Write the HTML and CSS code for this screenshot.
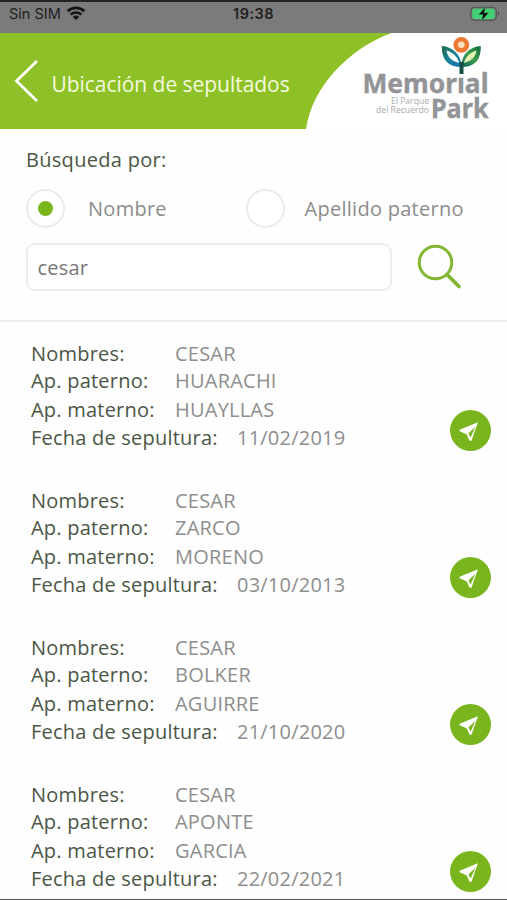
FILE: index.html
```
<!DOCTYPE html>
<html lang="es">
<head>
<meta charset="utf-8">
<title>Ubicación de sepultados</title>
<link rel="stylesheet" href="styles.css">
</head>
<body>
<svg class="defs" width="0" height="0" aria-hidden="true">
  <symbol id="plane" viewBox="0 0 42 42"><path fill="#fff" fill-rule="evenodd" d="M28.600 12.600 9.800 20.300V21.800L17 24.800 20 31.500H22ZM26 17.200 21.200 28.200 18.800 24.200Z"/></symbol>
</svg>
<div class="status">
  <span class="carrier">Sin SIM</span>
  <svg class="wifi" width="20" height="15" viewBox="0 0 20 15"><g fill="none" stroke="#161616" stroke-width="2.7"><path d="M1.6 5.3a12.2 12.2 0 0 1 16.8 0"/><path d="M4.7 8.6a7.7 7.7 0 0 1 10.6 0"/></g><path fill="#161616" d="M10 14 6.8 10.9a4.6 4.6 0 0 1 6.4 0Z"/></svg>
  <span class="clock">19:38</span>
  <svg class="battery" width="31" height="16" viewBox="0 0 31 16"><rect x=".8" y="1.3" width="25.5" height="13" rx="3.5" fill="none" stroke="#4b504d"/><rect x="2.2" y="2.7" width="22.7" height="10.2" rx="2" fill="#43cf73"/><path d="M27.8 5.6q3 2.2 0 4.4Z" fill="#4b504d"/><path d="M15.7.8 8.3 8.7h4.6L11.3 15l7.6-8.2h-4.7Z" fill="#0c0c0c" stroke="#43cf73" stroke-width=".5"/></svg>
</div>
<header class="header">
  <svg class="back" width="26" height="44" viewBox="0 0 26 44"><path d="M24 2 3.500 22 24 42" fill="none" stroke="#fff" stroke-width="2.800"/></svg>
  <h1 class="title">Ubicación de sepultados</h1>
  <svg class="logo" width="202" height="97" viewBox="0 0 202 97">
    <defs>
      <linearGradient id="lf" x1="0" y1="0" x2="1" y2="1"><stop offset="0" stop-color="#1b6a45"/><stop offset=".45" stop-color="#1a8295"/><stop offset="1" stop-color="#1677b5"/></linearGradient>
      <linearGradient id="rf" x1="1" y1="0" x2="0" y2="1"><stop offset="0" stop-color="#12663f"/><stop offset=".5" stop-color="#3c9f4c"/><stop offset="1" stop-color="#0c6260"/></linearGradient>
    </defs>
    <path fill="#fff" d="M202 0H86.500C45 15 7 53 1 96V97H202Z"/>
    <circle cx="156.300" cy="11.800" r="5.600" fill="#fde0bf" stroke="#ee7934" stroke-width="4.600"/>
    <path fill="url(#lf)" d="M136.800 13C147 14 156 20 156.500 34 143 34 136.500 27 136.800 13Z"/>
    <path fill="url(#rf)" d="M175.800 13C165 14 156.500 20 156.500 34 170 34 176 27 175.800 13Z"/>
    <path fill="#f4fbfb" d="M141.500 17.500C148 19.500 153 24 154 30 146 27.500 142.500 24 141.500 17.500Z"/>
    <path fill="#e2f2b4" d="M171.500 17.500C165 19.500 160 24 159 30 167 27.500 170.500 24 171.500 17.500Z"/>
    <path d="M156.500 29V41" stroke="#174f48" stroke-width="4"/>
    <text x="57.500" y="59.500" class="brand" textLength="126" lengthAdjust="spacingAndGlyphs">Memorıal</text>
    <text x="126" y="85" class="brand" textLength="57.500" lengthAdjust="spacingAndGlyphs">Park</text>
    <text x="86" y="71" class="tag" textLength="38" lengthAdjust="spacingAndGlyphs">El Parque</text>
    <text x="71" y="79.500" class="tag" textLength="53" lengthAdjust="spacingAndGlyphs">del Recuerdo</text>
  </svg>
</header>
<section class="search">
  <div class="label">Búsqueda por:</div>
  <div class="options">
    <div class="option first"><span class="radio on"></span><span class="name">Nombre</span></div>
    <div class="option"><span class="radio"></span><span class="name wide">Apellido paterno</span></div>
  </div>
  <div class="query">
    <div class="field">cesar</div>
    <svg class="lens" width="48" height="48" viewBox="0 0 48 48"><g fill="none" stroke="#82b633"><circle cx="19.500" cy="19.500" r="16.300" stroke-width="3"/><path d="M31 31.500 43 43.500" stroke-width="3.800" stroke-linecap="round"/></g></svg>
  </div>
</section>
<main class="results">
  <article class="person">
    <dl class="data"><dt>Nombres:</dt><dd>CESAR</dd><dt>Ap. paterno:</dt><dd>HUARACHI</dd><dt>Ap. materno:</dt><dd>HUAYLLAS</dd><dt class="long">Fecha de sepultura:</dt><dd class="date">11/02/2019</dd></dl>
    <span class="go"><svg width="41" height="41"><use href="#plane"/></svg></span>
  </article>
  <article class="person">
    <dl class="data"><dt>Nombres:</dt><dd>CESAR</dd><dt>Ap. paterno:</dt><dd>ZARCO</dd><dt>Ap. materno:</dt><dd>MORENO</dd><dt class="long">Fecha de sepultura:</dt><dd class="date">03/10/2013</dd></dl>
    <span class="go"><svg width="41" height="41"><use href="#plane"/></svg></span>
  </article>
  <article class="person">
    <dl class="data"><dt>Nombres:</dt><dd>CESAR</dd><dt>Ap. paterno:</dt><dd>BOLKER</dd><dt>Ap. materno:</dt><dd>AGUIRRE</dd><dt class="long">Fecha de sepultura:</dt><dd class="date">21/10/2020</dd></dl>
    <span class="go"><svg width="41" height="41"><use href="#plane"/></svg></span>
  </article>
  <article class="person">
    <dl class="data"><dt>Nombres:</dt><dd>CESAR</dd><dt>Ap. paterno:</dt><dd>APONTE</dd><dt>Ap. materno:</dt><dd>GARCIA</dd><dt class="long">Fecha de sepultura:</dt><dd class="date">22/02/2021</dd></dl>
    <span class="go"><svg width="41" height="41"><use href="#plane"/></svg></span>
  </article>
</main>
</body>
</html>
```
FILE: styles.css
```
* { box-sizing: border-box; }
body {
  margin: 0;
  height: 900px;
  display: flex;
  flex-direction: column;
  overflow: hidden;
  background: #fefefe;
  border-bottom: 1px solid #555;
  font-family: "Open Sans", "Noto Sans", sans-serif;
  font-size: 20px;
  color: #4c5646;
}
.defs { position: absolute; }
.status {
  flex: none;
  height: 33px;
  display: grid;
  grid-template-columns: 66px 154px 1fr 37px;
  align-items: center;
  background: #7b7b7b;
  border-top: 2px solid #252525;
  color: #202020;
  font-family: Inter, sans-serif;
  font-size: 14.5px;
  line-height: 20px;
}
.carrier { padding-left: 9px; white-space: nowrap; margin-top: -7px; }
.wifi { margin-top: -8px; }
.clock { font-weight: 600; margin: -7px 0 0 13px; letter-spacing: .5px; }
.battery { margin-top: -7px; }
.header {
  flex: none;
  height: 96px;
  display: flex;
  align-items: center;
  background: #8dc127;
}
.back { margin-left: 13px; }
.title {
  flex: 1;
  margin: 5px 0 0 12.5px;
  font-size: 21px;
  font-weight: 400;
  line-height: 28px;
  letter-spacing: -.04px;
  color: #f4fadf;
  white-space: nowrap;
}
.logo { flex: none; }
.brand { font: 700 27.5px "Noto Sans", sans-serif; fill: #929497; stroke: #929497; stroke-width: .4px; }
.tag { font: 400 9px "Open Sans", sans-serif; fill: #a9aaac; }
.search {
  flex: none;
  height: 193px;
  padding: 17px 0 0 26px;
  border-bottom: 2px solid #ececec;
}
.label { line-height: 28px; letter-spacing: .3px; }
.options { display: flex; margin-top: 15px; color: #8c8c8c; }
.option { display: flex; align-items: center; }
.first { width: 220px; }
.radio {
  width: 39px;
  height: 39px;
  display: grid;
  place-items: center;
  border: 2px solid #ebebeb;
  border-radius: 50%;
  background: #fff;
}
.on::after {
  content: "";
  width: 15px;
  height: 15px;
  border-radius: 50%;
  background: #7ab51d;
}
.name { margin: 0 0 0 23px; line-height: 28px; letter-spacing: .27px; }
.wide { margin-left: 19.5px; }
.query { display: flex; align-items: center; margin-top: 15px; }
.field {
  width: 366px;
  height: 48px;
  padding: 0 9.5px;
  border: 2px solid #ededed;
  border-radius: 9px;
  background: #fff;
  color: #777;
  line-height: 45px;
  letter-spacing: .2px;
}
.lens { margin-left: 24px; }
.results { padding: 18px 0 0 31px; }
.person { height: 147px; display: flex; }
.data {
  width: 419px;
  height: 113px;
  margin: 0;
  display: grid;
  grid-template-columns: 144px 62px 1fr;
  grid-template-rows: 27px 29px 28px 29px;
  line-height: 28px;
  white-space: nowrap;
  letter-spacing: .22px;
}
.data dd { margin: 0; grid-column: 2 / 4; color: #8e8e8e; }
.data .long { grid-column: 1 / 3; }
.data .date { grid-column: 3; }
.go {
  width: 41px;
  height: 41px;
  margin-top: 70px;
  border-radius: 50%;
  background: #7ab51d;
}
.go svg { display: block; }
```
